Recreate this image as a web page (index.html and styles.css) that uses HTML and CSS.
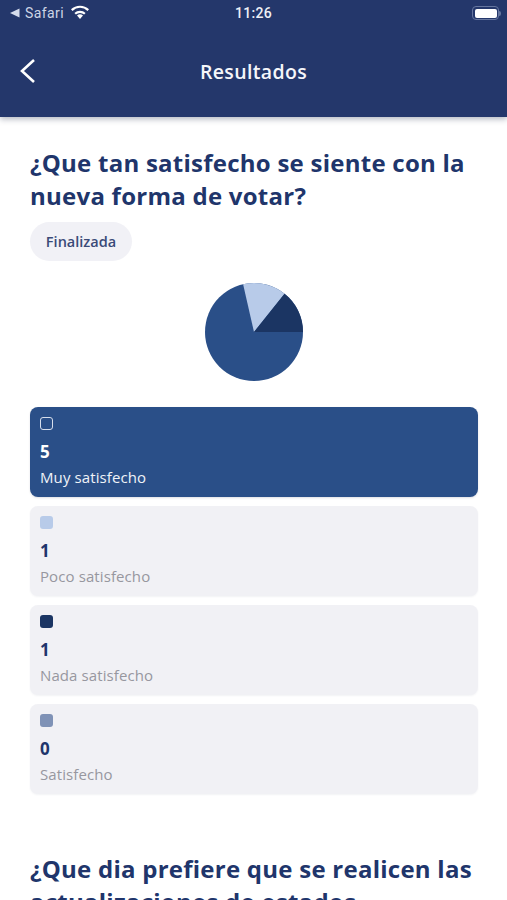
FILE: index.html
```html
<!DOCTYPE html>
<html lang="es">
<head>
<meta charset="utf-8">
<title>Resultados</title>
<link rel="stylesheet" href="styles.css">
</head>
<body>
<div class="screen">
  <header class="header">
    <div class="status">
      <div class="status-left">
        <svg class="back-tri" viewBox="0 0 10 10"><path d="M0 5 9.500 0.500V9.500Z"/></svg>
        <span class="status-app">Safari</span>
        <svg class="wifi" viewBox="0 0 20 14"><path d="M10 14 7 10.600A4.500 4.500 0 0 1 13 10.600Z"/><path d="M4.400 7.900A8.200 8.200 0 0 1 15.600 7.900L14.100 9.500A6 6 0 0 0 5.900 9.500Z"/><path d="M1 4.300A13 13 0 0 1 19 4.300L17.500 5.900A10.800 10.800 0 0 0 2.500 5.900Z"/></svg>
      </div>
      <span class="status-time">11:26</span>
      <div class="status-right">
        <div class="battery"><div class="battery-fill"></div></div>
        <div class="battery-tip"></div>
      </div>
    </div>
    <div class="nav">
      <svg class="chevron" viewBox="0 0 16 24"><path d="M14 1 2 12 14 23"/></svg>
      <h1 class="nav-title">Resultados</h1>
    </div>
  </header>
  <main class="content">
    <section class="poll">
      <h2 class="question">¿Que tan satisfecho se siente con la nueva forma de votar?</h2>
      <span class="pill">Finalizada</span>
      <svg class="pie" viewBox="0 0 100 100">
        <circle class="slice-main" cx="50" cy="50" r="49"/>
        <path class="slice-light" d="M50 50 39.100 2.230A49 49 0 0 1 80.550 11.690Z"/>
        <path class="slice-dark" d="M50 50 80.550 11.690A49 49 0 0 1 99 50Z"/>
      </svg>
      <ul class="options">
        <li class="option option-active">
          <span class="swatch swatch-outline"></span>
          <span class="count">5</span>
          <span class="label">Muy satisfecho</span>
        </li>
        <li class="option">
          <span class="swatch swatch-light"></span>
          <span class="count">1</span>
          <span class="label">Poco satisfecho</span>
        </li>
        <li class="option">
          <span class="swatch swatch-dark"></span>
          <span class="count">1</span>
          <span class="label">Nada satisfecho</span>
        </li>
        <li class="option">
          <span class="swatch swatch-mid"></span>
          <span class="count">0</span>
          <span class="label">Satisfecho</span>
        </li>
      </ul>
    </section>
    <section class="poll poll-next">
      <h2 class="question">¿Que dia prefiere que se realicen las actualizaciones de estados</h2>
    </section>
  </main>
</div>
</body>
</html>
```
FILE: styles.css
```css
* { box-sizing: border-box; }
html, body { margin: 0; padding: 0; height: 900px; overflow: hidden; background: #fff; }
body { font-family: "Open Sans", "Noto Sans", sans-serif; }
.screen { height: 900px; overflow: hidden; display: flex; flex-direction: column; }

.header {
  height: 117px;
  flex: none;
  background: #24376b;
  box-shadow: 0 2px 6px rgba(30, 40, 70, 0.35);
  color: #fff;
  position: relative;
  padding: 0 6px 0 10px;
}
.status { height: 26px; display: grid; grid-template-columns: 225px auto 1fr; align-items: center; }
.status-left { display: flex; align-items: center; }
.back-tri { width: 10px; height: 10px; fill: #d5dcec; margin-right: 5px; }
.status-app { font-family: "Roboto", "Liberation Sans", sans-serif; font-size: 14px; color: #ced5e6; letter-spacing: 0.4px; margin-right: 6px; }
.wifi { width: 20px; height: 14px; fill: #fff; margin-top: -2px; }
.status-time { font-family: "Roboto", "Liberation Sans", sans-serif; font-size: 14px; font-weight: 500; color: #eef0f6; letter-spacing: 0.3px; }
.status-right { display: flex; justify-content: flex-end; align-items: center; }
.battery { width: 27px; height: 14px; border: 1.500px solid #66769f; border-radius: 4px; padding: 1.500px; }
.battery-fill { width: 100%; height: 100%; background: #fff; border-radius: 2px; }
.battery-tip { width: 2px; height: 5px; background: #66769f; border-radius: 0 2px 2px 0; }

.nav { height: 91px; position: relative; display: flex; align-items: center; justify-content: center; padding-right: 4px; }
.chevron { position: absolute; left: 10px; top: 33px; width: 16px; height: 24px; fill: none; stroke: #fff; stroke-width: 2.600; }
.nav-title { margin: 0; font-size: 19.500px; font-weight: 600; line-height: 24px; color: #f5f6fa; letter-spacing: 0.35px; }

.content { padding: 29px 29px 0 30px; }
.question { margin: 0; font-size: 24px; font-weight: 700; line-height: 33px; color: #20356b; letter-spacing: 0.25px; }
.pill {
  display: inline-block;
  margin-top: 10px;
  height: 39px;
  width: 102px;
  border-radius: 20px;
  background: #f1f1f6;
  color: #3a4a78;
  font-size: 14.500px;
  font-weight: 600;
  line-height: 39px;
  text-align: center;
}
.pie { display: block; width: 100px; height: 100px; margin: 21px auto 0; }
.slice-main { fill: #2a4f88; }
.slice-light { fill: #b8cbe9; }
.slice-dark { fill: #1b3563; }

.options { list-style: none; margin: 25px 0 0; padding: 0; display: flex; flex-direction: column; gap: 9px; }
.option {
  height: 90px;
  border-radius: 8px;
  background: #f1f1f5;
  box-shadow: 0 1px 2px rgba(40, 50, 80, 0.06);
  padding: 10px;
  display: flex;
  flex-direction: column;
  align-items: flex-start;
}
.option-active { background: #2a4f88; box-shadow: 0 1px 2px rgba(40, 50, 80, 0.15); }
.swatch { width: 13px; height: 13px; border-radius: 3px; flex: none; }
.swatch-outline { border: 1.500px solid #d6deec; }
.swatch-light { background: #b8cbe9; }
.swatch-dark { background: #1b3563; }
.swatch-mid { background: #7f92b6; }
.count { margin-top: 10px; font-size: 17px; font-weight: 700; line-height: 24px; color: #20356b; }
.label { margin-top: 2px; font-size: 15px; line-height: 22px; color: #97979f; letter-spacing: 0.1px; }
.option-active .count { color: #fff; }
.option-active .label { color: #f0f3f8; }

.poll-next { margin-top: 58px; }
```
